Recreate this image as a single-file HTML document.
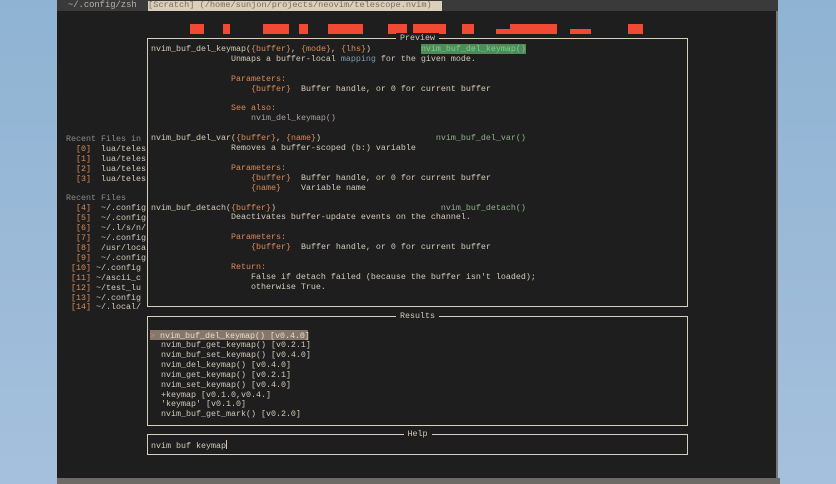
<!DOCTYPE html>
<html><head><meta charset="utf-8"><style>
*{margin:0;padding:0;box-sizing:border-box}
body{width:836px;height:484px;overflow:hidden;background:linear-gradient(180deg,#8fb3d3,#a5c0dc);position:relative;font-family:"Liberation Mono",monospace;font-size:8.33px;line-height:9.9px;color:#d3cbb8}
#term{position:absolute;left:57px;top:0;width:721px;height:480px;background:#1e1e1e;border-right:2px solid #777}
#bot{position:absolute;left:57px;top:478px;width:723px;height:6px;background:#6e6a66}
#tab{position:absolute;left:57px;top:0;width:721px;height:11px;background:#3a3a3a}
.a{position:absolute;white-space:pre}
.o{color:#d98b58}.g{color:#8fb08a}.d{color:#8a8a8a}.b{color:#7f9bb0}
.box{position:absolute;border:1.5px solid #d6cfbd}
.t{position:absolute;top:-6px;left:0;right:0;text-align:center;line-height:10px}
.t span{background:#1e1e1e;padding:0 4px}
.r{position:absolute;background:#f04a35}
</style></head><body>
<div id="term"></div><div id="bot"></div>
<div id="tab"></div>
<div class="a d" style="left:68px;top:1px;color:#b8b2a8;font-size:8.8px">~/.config/zsh</div>
<div class="a" style="left:148px;top:1px;width:294px;height:10px;background:#d9cfbb;color:#7b6d5d;font-size:8.6px;overflow:hidden">[Scratch] (/home/sunjon/projects/neovim/telescope.nvim)</div>
<div class="r" style="left:190px;top:24px;width:14px;height:10px"></div>
<div class="r" style="left:223px;top:24px;width:7px;height:10px"></div>
<div class="r" style="left:263px;top:24px;width:26px;height:10px"></div>
<div class="r" style="left:299px;top:24px;width:9px;height:10px"></div>
<div class="r" style="left:328px;top:24px;width:35px;height:10px"></div>
<div class="r" style="left:388px;top:24px;width:19px;height:10px"></div>
<div class="r" style="left:413px;top:24px;width:33px;height:10px"></div>
<div class="r" style="left:462px;top:24px;width:12px;height:10px"></div>
<div class="r" style="left:496px;top:29px;width:14px;height:5px"></div>
<div class="r" style="left:510px;top:24px;width:47px;height:10px"></div>
<div class="r" style="left:570px;top:29px;width:21px;height:5px"></div>
<div class="r" style="left:628px;top:24px;width:15px;height:10px"></div>

<div class="a" style="left:66px;top:135px"><span class="d">Recent Files in</span>
  <span class="o">[0]</span>  lua/teles
  <span class="o">[1]</span>  lua/teles
  <span class="o">[2]</span>  lua/teles
  <span class="o">[3]</span>  lua/teles

<span class="d">Recent Files</span>
  <span class="o">[4]</span>  ~/.config
  <span class="o">[5]</span>  ~/.config
  <span class="o">[6]</span>  ~/.l/s/n/
  <span class="o">[7]</span>  ~/.config
  <span class="o">[8]</span>  /usr/loca
  <span class="o">[9]</span>  ~/.config
 <span class="o">[10]</span> ~/.config
 <span class="o">[11]</span> ~/ascii_c
 <span class="o">[12]</span> ~/test_lu
 <span class="o">[13]</span> ~/.config
 <span class="o">[14]</span> ~/.local/</div>

<div class="box" style="left:147px;top:38px;width:541px;height:269px"><div class="t"><span>Preview</span></div></div>
<div class="a" style="left:151px;top:45px">nvim_buf_del_keymap(<span class="o">{buffer}</span>, <span class="o">{mode}</span>, <span class="o">{lhs}</span>)          <span style="background:#4f8a5a;color:#7fd08a">nvim_buf_del_keymap()</span>
                Unmaps a buffer-local <span class="b">mapping</span> for the given mode.

                <span class="o">Parameters:</span>
                    <span class="o">{buffer}</span>  Buffer handle, or 0 for current buffer

                <span class="o">See also:</span>
                    <span style="color:#a8a296">nvim_del_keymap()</span>

nvim_buf_del_var(<span class="o">{buffer}</span>, <span class="o">{name}</span>)                       <span class="g">nvim_buf_del_var()</span>
                Removes a buffer-scoped (b:) variable

                <span class="o">Parameters:</span>
                    <span class="o">{buffer}</span>  Buffer handle, or 0 for current buffer
                    <span class="o">{name}</span>    Variable name

nvim_buf_detach(<span class="o">{buffer}</span>)                                 <span class="g">nvim_buf_detach()</span>
                Deactivates buffer-update events on the channel.

                <span class="o">Parameters:</span>
                    <span class="o">{buffer}</span>  Buffer handle, or 0 for current buffer

                <span class="o">Return:</span>
                    False if detach failed (because the buffer isn't loaded);
                    otherwise True.</div>

<div class="box" style="left:147px;top:316px;width:541px;height:110px"><div class="t"><span>Results</span></div></div>
<div class="a" style="left:150px;top:330px;background:#85786b;color:#e6dccb;width:158px;height:10px;line-height:10px;padding-top:1px"><span class="o">&gt;</span> nvim_buf_del_keymap() [v0.4.0]</div>
<div class="a" style="left:151px;top:341px">  nvim_buf_get_keymap() [v0.2.1]
  nvim_buf_set_keymap() [v0.4.0]
  nvim_del_keymap() [v0.4.0]
  nvim_get_keymap() [v0.2.1]
  nvim_set_keymap() [v0.4.0]
  +keymap [v0.1.0,v0.4.]
  'keymap' [v0.1.0]
  nvim_buf_get_mark() [v0.2.0]</div>

<div class="box" style="left:147px;top:434px;width:541px;height:21px"><div class="t"><span>Help</span></div></div>
<div class="a" style="left:151px;top:440px">nvim buf keymap<span style="display:inline-block;width:1px;height:9px;background:#d3cbb8;vertical-align:-1px"></span></div>
</body></html>
